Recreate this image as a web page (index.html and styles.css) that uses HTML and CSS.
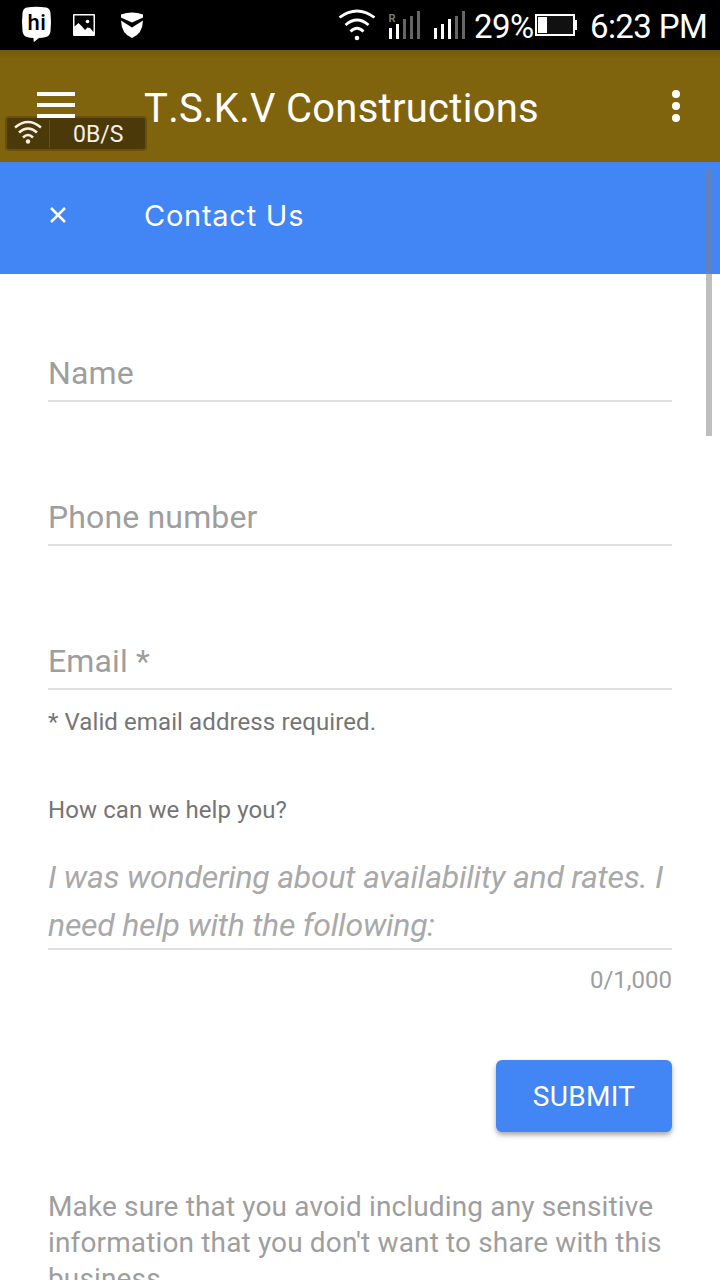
FILE: index.html
```html
<!DOCTYPE html>
<html lang="en">
<head>
    <meta charset="UTF-8">
    <meta name="viewport" content="width=device-width, initial-scale=1.0">
    <title>T.S.K.V Constructions</title>
    <link rel="stylesheet" href="styles.css">
</head>
<body>

<div class="statusbar">
    <div class="notifications">
        <svg width="32" height="38" viewBox="0 0 32 38">
            <path d="M6 1.500Q15 0 25 1.500Q29 2 29.500 7Q30.500 16 29.500 25Q29 30 25 31Q21 32 18 32L13 36Q12.500 36 12.500 32Q9 32 6 31Q2 30 1.500 25Q.5 16 1.500 7Q2 2 6 1.500Z" fill="#fff"/>
            <text class="hike" x="16" y="24" text-anchor="middle">hi</text>
        </svg>
        <svg class="picture" width="22" height="22" viewBox="0 0 22 22">
            <path d="M1 0H21Q22 0 22 1V21Q22 22 21 22H1Q0 22 0 21V1Q0 0 1 0ZM1.500 1.500V12.500L5.500 9L9 12.500L12 16L14.500 13.500L17 14L20.500 18V1.500Z" fill="#fff" fill-rule="evenodd"/>
            <circle cx="14.500" cy="7.500" r="1.800" fill="#fff"/>
        </svg>
        <svg class="shield" width="22" height="26" viewBox="0 0 22 26">
            <path d="M0 2.500Q11-1.500 22 2.500V5.500L11 10.500L0 5.500Z" fill="#fff"/>
            <path d="M0 8.500L11 15.500L22 8.500Q21.500 22 11 26Q.5 22 0 8.500Z" fill="#fff"/>
        </svg>
    </div>
    <div class="system">
        <svg class="wifi" width="38" height="34" viewBox="0 0 38 34" fill="none" stroke="#fff" stroke-width="2.800">
            <path d="M1.500 9.500Q19-3.500 36.500 9.500"/>
            <path d="M7.500 17Q19 7 30.500 17"/>
            <path d="M12.500 23.500Q19 17 25.500 23.500"/>
            <circle cx="19" cy="30" r="2.300" fill="#fff" stroke="none"/>
        </svg>
        <svg class="signal" width="32" height="30" viewBox="0 0 32 30">
            <path d="M0 18h3v11H0zM7 14h3v15H7z" fill="#fff"/>
            <path d="M14 9h3v20h-3zM21 6h3v23h-3zM28 1h3v28h-3z" fill="#666"/>
            <text class="roaming" x="-.5" y="12">R</text>
        </svg>
        <svg class="signal2" width="32" height="30" viewBox="0 0 32 30">
            <path d="M0 18h3v11H0zM7 14h3v15H7zM14 9h3v20h-3z" fill="#fff"/>
            <path d="M21 6h3v23h-3zM28 1h3v28h-3z" fill="#666"/>
        </svg>
        <span class="percent">29%</span>
        <svg class="battery" width="42" height="22" viewBox="0 0 42 22">
            <rect x="1" y="1" width="38" height="20" fill="#111" stroke="#fff" stroke-width="2"/>
            <path d="M3 3h9v16H3zM40 6h2v10h-2z" fill="#fff"/>
        </svg>
        <span class="clock">6:23 PM</span>
    </div>
</div>

<header class="toolbar">
    <svg class="menu" width="38" height="26" viewBox="0 0 38 26">
        <path d="M0 0h38v4H0zM0 11h38v4H0zM0 22h38v4H0z" fill="#fff"/>
    </svg>
    <h1>T.S.K.V Constructions</h1>
    <svg class="more" width="8" height="32" viewBox="0 0 8 32" fill="#fff">
        <circle cx="4" cy="4" r="4"/>
        <circle cx="4" cy="16" r="4"/>
        <circle cx="4" cy="28" r="4"/>
    </svg>
    <div class="speed">
        <svg width="28" height="26" viewBox="0 0 28 26" fill="none" stroke="#f5f0e2" stroke-width="2.500">
            <path d="M1 7.500Q14-3.500 27 7.500"/>
            <path d="M5 12.500Q14 4.500 23 12.500"/>
            <path d="M9 17.500Q14 12.500 19 17.500"/>
            <circle cx="14" cy="21.500" r="2.200" fill="#f5f0e2" stroke="none"/>
        </svg>
        <span>0B/S</span>
    </div>
</header>

<div class="banner">
    <svg width="16" height="16" viewBox="0 0 16 16" stroke="#fff" stroke-width="2.500">
        <path d="M1 1L15 15M15 1L1 15"/>
    </svg>
    <h2>Contact Us</h2>
</div>

<form class="contact">
    <input type="text" name="name" placeholder="Name">
    <input type="tel" name="phone" placeholder="Phone number">
    <input type="email" name="email" placeholder="Email *">
    <p class="hint">* Valid email address required.</p>
    <label for="message">How can we help you?</label>
    <textarea id="message" name="message" rows="2" placeholder="I was wondering about availability and rates. I need help with the following:"></textarea>
    <span class="counter">0/1,000</span>
    <button type="submit">SUBMIT</button>
    <p class="notice">Make sure that you avoid including any sensitive information that you don't want to share with this business.</p>
</form>

<div class="scrollbar"></div>

</body>
</html>
```
FILE: styles.css
```css
* {
    box-sizing: border-box;
}
body {
    font-family: Roboto, sans-serif;
    margin: 0;
    height: 1280px;
    overflow: hidden;
    position: relative;
    background-color: #fff;
}
svg {
    display: block;
    flex: none;
    overflow: visible;
}
h1, h2, p {
    margin: 0;
    font-weight: normal;
}
.statusbar {
    display: flex;
    justify-content: space-between;
    height: 50px;
    background-color: #000;
    color: #fff;
}
.notifications {
    display: flex;
    align-items: flex-start;
    padding: 6px 0 0 21px;
}
.hike {
    font: 500 22px Roboto, sans-serif;
    letter-spacing: 0.5px;
    fill: #000;
}
.picture {
    margin: 8px 0 0 20px;
}
.shield {
    margin: 6px 0 0 26px;
}
.system {
    display: flex;
    align-items: center;
    padding-right: 13px;
    font-size: 33px;
    letter-spacing: -0.6px;
    white-space: nowrap;
}
.wifi {
    margin-right: 13px;
}
.signal {
    margin-right: 13px;
}
.signal2 {
    margin-right: 8px;
}
.roaming {
    font: bold 11px Roboto, sans-serif;
    fill: #777;
}
.percent {
    width: 61px;
    padding-top: 2px;
}
.clock {
    width: 117px;
    margin-left: 13px;
    padding-top: 2px;
}
.toolbar {
    display: flex;
    align-items: center;
    position: relative;
    height: 112px;
    padding: 0 40px 0 37px;
    background: linear-gradient(#6f5a10, #7f630d 8px);
    color: #fff;
}
.menu {
    z-index: 1;
    margin: 0 69px 2px 0;
}
.toolbar h1 {
    flex: 1;
    font-size: 40px;
    line-height: 48px;
    font-kerning: none;
    letter-spacing: 0.27px;
    padding-top: 6px;
    white-space: nowrap;
}
.speed {
    display: flex;
    align-items: center;
    position: absolute;
    left: 5px;
    top: 66px;
    width: 142px;
    height: 35px;
    padding-left: 7px;
    border: 2px solid #68500c;
    border-radius: 4px;
    background-color: #4b390a;
    color: #f5f0e2;
}
.speed svg {
    margin-top: -1px;
}
.speed span {
    height: 28px;
    margin-left: 7px;
    padding-left: 23px;
    border-left: 1px solid #66511a;
    font-size: 23px;
    line-height: 29px;
}
.banner {
    display: flex;
    align-items: center;
    height: 112px;
    padding: 0 50px 6px;
    background-color: #4285f4;
    color: #fff;
}
.banner h2 {
    margin-left: 78px;
    font-family: Inter, sans-serif;
    font-size: 29px;
    letter-spacing: 0.75px;
}
.contact {
    display: flex;
    flex-direction: column;
    padding: 70px 48px 0;
}
.contact input, .contact textarea {
    width: 100%;
    margin: 0 0 86px;
    padding: 0;
    border: 0;
    border-bottom: 2px solid #e0e0e0;
    border-radius: 0;
    outline: none;
    background: none;
    font-family: inherit;
    font-size: 32px;
    letter-spacing: 0.15px;
}
.contact input {
    height: 58px;
    padding-top: 2px;
}
.contact input[type="email"] {
    margin-bottom: 14px;
}
::placeholder {
    color: #9e9e9e;
    opacity: 1;
}
.hint, .contact label {
    color: #757575;
    font-size: 24px;
    line-height: 36px;
    letter-spacing: 0.1px;
}
.contact label {
    margin: 52px 0 25px;
}
.contact textarea {
    height: 97px;
    margin-bottom: 12px;
    line-height: 48px;
    letter-spacing: -0.24px;
    font-style: italic;
    resize: none;
    overflow: hidden;
}
.contact textarea::placeholder {
    color: #a9a9a9;
}
.counter {
    align-self: flex-end;
    color: #9e9e9e;
    font-size: 24px;
    line-height: 36px;
}
.contact button {
    align-self: flex-end;
    width: 176px;
    height: 72px;
    margin: 62px 0 57px;
    border: 0;
    border-radius: 6px;
    background-color: #4285f4;
    box-shadow: 0 3px 5px rgba(0, 0, 0, 0.35);
    color: #fff;
    font-family: inherit;
    font-size: 28px;
    letter-spacing: 0.3px;
}
.notice {
    color: #9e9e9e;
    font-size: 28px;
    line-height: 36px;
    letter-spacing: 0.14px;
}
.scrollbar {
    position: absolute;
    right: 8px;
    top: 170px;
    width: 6px;
    height: 266px;
    background-color: rgba(128, 128, 128, 0.5);
}
```
